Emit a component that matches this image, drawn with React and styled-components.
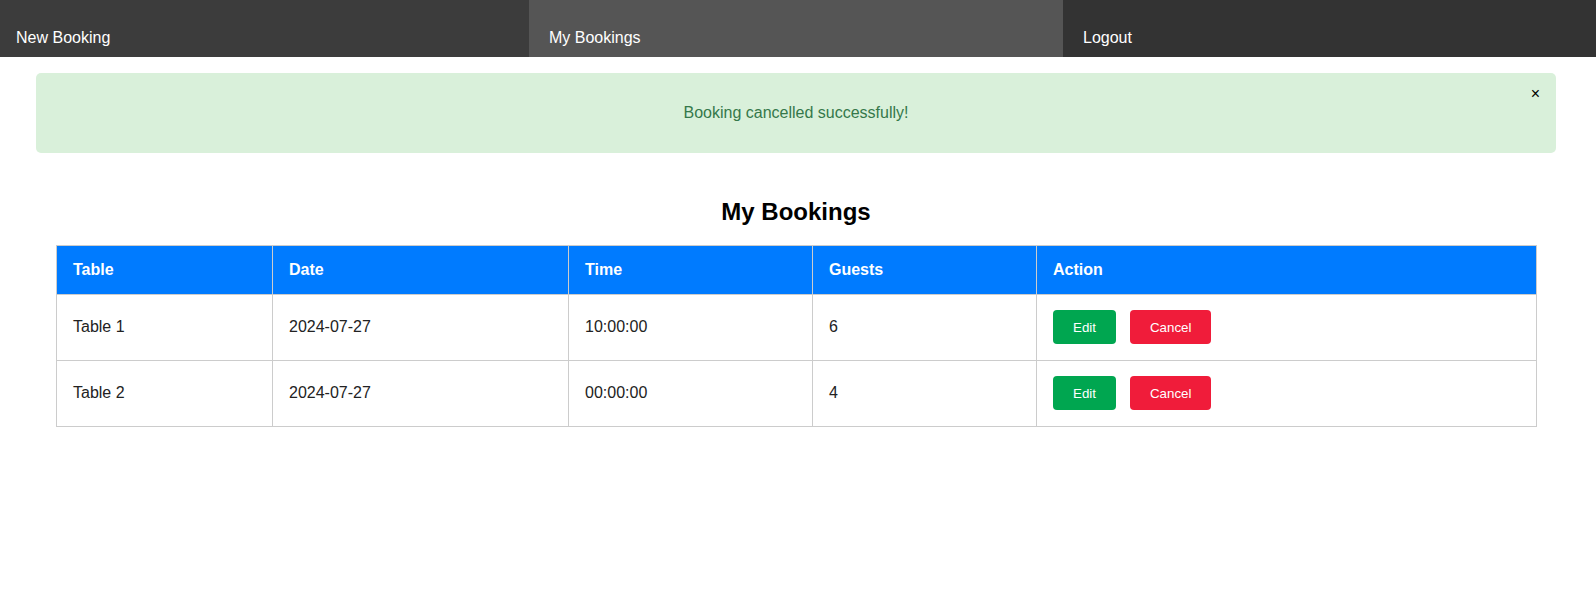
import styled, { createGlobalStyle } from 'styled-components';

const GlobalStyle = createGlobalStyle`
  body {
    margin: 0;
    background: #fff;
    font-family: "Liberation Sans", Arial, sans-serif;
  }
`;

const Nav = styled.nav`
  display: flex;
  height: 57px;
  background: #333;
`;

const NavItem = styled.a`
  box-sizing: border-box;
  flex: ${({ $width }) => ($width ? `0 0 ${$width}px` : '1 1 0')};
  display: flex;
  align-items: flex-end;
  padding: 0 ${({ $first }) => ($first ? '16px' : '20px')} 10px;
  color: #fff;
  font-size: 16px;
  line-height: 19px;
  text-decoration: none;
  background: ${({ $bg }) => $bg};
`;

const Alert = styled.div`
  position: relative;
  margin: 16px 40px 0 36px;
  height: 80px;
  display: flex;
  align-items: center;
  justify-content: center;
  background: #d9f0da;
  color: #35784a;
  font-size: 16px;
  border-radius: 5px;
`;

const CloseButton = styled.button`
  position: absolute;
  top: 12px;
  right: 16px;
  padding: 0;
  border: none;
  background: none;
  font-family: "Liberation Sans", Arial, sans-serif;
  font-size: 16px;
  line-height: 18px;
  color: #000;
  cursor: pointer;
`;

const Section = styled.section`
  padding: 0 60px 0 56px;
`;

const Title = styled.h2`
  margin: 45px 0 19px;
  text-align: center;
  font-size: 24px;
  line-height: 28px;
  font-weight: bold;
  color: #000;
`;

const Table = styled.table`
  width: 100%;
  border-collapse: collapse;
  table-layout: fixed;
  font-size: 16px;
`;

const Th = styled.th`
  background: #007bff;
  color: #fff;
  text-align: left;
  font-weight: bold;
  padding: 15px 16px;
  line-height: 18px;
  border: 1px solid #ccc;
`;

const Td = styled.td`
  color: #222;
  padding: 15px 16px 16px;
  line-height: 18px;
  border: 1px solid #ccc;
  height: 34px;
`;

const Actions = styled.div`
  display: flex;
  gap: 14px;
`;

const ActionButton = styled.button`
  height: 34px;
  padding: 0 20px;
  border: none;
  border-radius: 4px;
  color: #fff;
  font-family: "Liberation Sans", Arial, sans-serif;
  font-size: 13.33px;
  background: ${({ $variant }) => ($variant === 'danger' ? '#f01c3a' : '#00a650')};
  cursor: pointer;
`;

const bookings = [
  { table: 'Table 1', date: '2024-07-27', time: '10:00:00', guests: 6 },
  { table: 'Table 2', date: '2024-07-27', time: '00:00:00', guests: 4 },
];

const widths = [216, 296, 244, 224, 500];

const App = () => (
  <>
    <GlobalStyle />
    <Nav>
      <NavItem $first $width={529} $bg="#3c3c3c" href="#">New Booking</NavItem>
      <NavItem $width={534} $bg="#555" href="#">My Bookings</NavItem>
      <NavItem $bg="#333" href="#">Logout</NavItem>
    </Nav>

    <Alert>
      Booking cancelled successfully!
      <CloseButton aria-label="Close">×</CloseButton>
    </Alert>

    <Section>
      <Title>My Bookings</Title>
      <Table>
        <colgroup>
          {widths.map((w, i) => (
            <col key={i} style={{ width: w }} />
          ))}
        </colgroup>
        <thead>
          <tr>
            <Th>Table</Th>
            <Th>Date</Th>
            <Th>Time</Th>
            <Th>Guests</Th>
            <Th>Action</Th>
          </tr>
        </thead>
        <tbody>
          {bookings.map((b) => (
            <tr key={b.table}>
              <Td>{b.table}</Td>
              <Td>{b.date}</Td>
              <Td>{b.time}</Td>
              <Td>{b.guests}</Td>
              <Td>
                <Actions>
                  <ActionButton>Edit</ActionButton>
                  <ActionButton $variant="danger">Cancel</ActionButton>
                </Actions>
              </Td>
            </tr>
          ))}
        </tbody>
      </Table>
    </Section>
  </>
);

export default App;
